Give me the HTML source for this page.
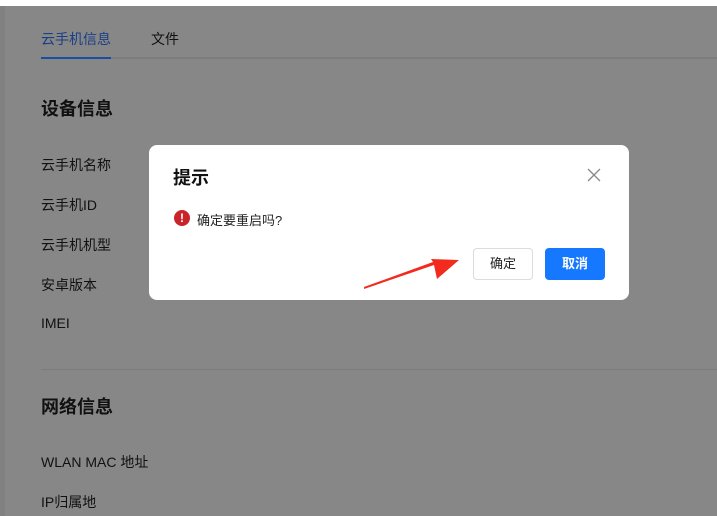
<!DOCTYPE html>
<html><head><meta charset="utf-8"><style>
*{margin:0;padding:0;box-sizing:border-box}
body{width:717px;height:516px;overflow:hidden;background:#878787;font-family:"Liberation Sans","Noto Sans CJK SC",sans-serif;position:relative}
.t{position:absolute;white-space:nowrap}
</style></head><body>
<div style="position:absolute;left:0;top:0;width:717px;height:6px;background:#fff"></div>
<div style="position:absolute;left:0;top:6px;width:5px;height:510px;background:#818181"></div>
<div class="t" style="left:41px;top:29px;font-size:14px;color:#1a3f86">云手机信息</div>
<div class="t" style="left:151px;top:29px;font-size:14px;color:#111">文件</div>
<div style="position:absolute;left:41px;top:57px;width:676px;height:2px;background:#7c7c7c"></div>
<div style="position:absolute;left:41px;top:57px;width:70px;height:2px;background:#1a4ea0"></div>
<div class="t" style="left:41px;top:95px;font-size:18px;font-weight:bold;color:#111">设备信息</div>
<div class="t" style="left:41px;top:155px;font-size:14px;color:#111">云手机名称</div>
<div class="t" style="left:41px;top:195px;font-size:14px;color:#111">云手机ID</div>
<div class="t" style="left:41px;top:235px;font-size:14px;color:#111">云手机机型</div>
<div class="t" style="left:41px;top:275px;font-size:14px;color:#111">安卓版本</div>
<div class="t" style="left:41px;top:315px;font-size:14px;color:#111">IMEI</div>
<div style="position:absolute;left:41px;top:369px;width:676px;height:1px;background:#7c7c7c"></div>
<div class="t" style="left:41px;top:393px;font-size:18px;font-weight:bold;color:#111">网络信息</div>
<div class="t" style="left:41px;top:452px;font-size:14px;color:#111">WLAN MAC 地址</div>
<div class="t" style="left:41px;top:492px;font-size:14px;color:#111">IP归属地</div>

<div style="position:absolute;left:149px;top:145px;width:480px;height:155px;background:#fff;border-radius:8px"></div>
<div class="t" style="left:173px;top:164px;font-size:18px;font-weight:bold;color:#111">提示</div>
<svg style="position:absolute;left:587px;top:168px" width="14" height="14"><path d="M1 1L13 13M13 1L1 13" stroke="#888" stroke-width="1.3"/></svg>
<div style="position:absolute;left:174px;top:210px;width:16px;height:16px;border-radius:50%;background:#c8242a;color:#fff;font-size:12px;font-weight:bold;text-align:center;line-height:16px">!</div>
<div class="t" style="left:197px;top:210px;font-size:13px;color:#222">确定要重启吗?</div>
<div style="position:absolute;left:473px;top:248px;width:60px;height:32px;border:1px solid #dcdcdc;border-radius:4px;background:#fff;font-size:13px;color:#222;text-align:center;line-height:30px">确定</div>
<div style="position:absolute;left:545px;top:248px;width:60px;height:32px;border-radius:4px;background:#1677ff;font-size:13px;font-weight:bold;color:#fff;text-align:center;line-height:32px">取消</div>
<svg style="position:absolute;left:0;top:0" width="717" height="516"><path d="M364 289L434 265L437 279L459 260L431 259L433 262L364 287Z" fill="#f22b1e"/></svg>
</body></html>
